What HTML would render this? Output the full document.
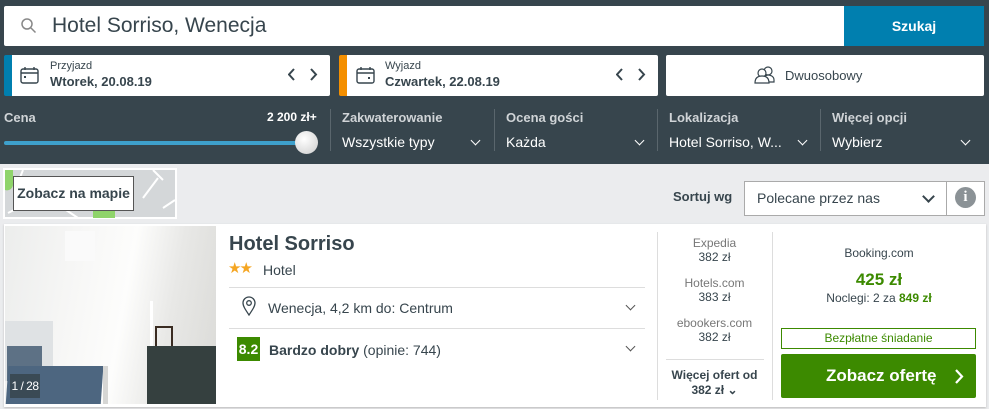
<!DOCTYPE html><html><head><meta charset="utf-8"><style>
*{box-sizing:border-box;margin:0;padding:0}
body{width:989px;height:409px;overflow:hidden;background:#ebecee;font-family:"Liberation Sans",sans-serif;position:relative;color:#37454d}
.a{position:absolute}
.top{left:0;top:0;width:989px;height:164px;background:#37454d}
.w{background:#fff;border-radius:2px}
.lbl{font-size:13px;color:#d0d4d7;font-weight:bold}
.val{font-size:14px;color:#fff}
.sep{width:1px;height:42px;background:#5a666d;top:109px}
.chev{width:7px;height:7px;border-right:1.6px solid #fff;border-bottom:1.6px solid #fff;transform:rotate(45deg)}
.chevd{width:7px;height:7px;border-right:1.6px solid #555;border-bottom:1.6px solid #555;transform:rotate(45deg)}
.g{color:#777;font-size:12px;text-align:center;width:115px}
.g b{display:block;color:#37454d;font-weight:normal}
</style></head><body>
<div class="a top"></div>
<div class="a w" style="left:4px;top:6px;width:842px;height:40px;border-radius:2px 0 0 2px"></div>
<svg class="a" style="left:20px;top:17px" width="17" height="17" viewBox="0 0 17 17"><circle cx="7" cy="7" r="5" fill="none" stroke="#888" stroke-width="1.5"/><path d="M11 11l4.5 4.5" stroke="#888" stroke-width="1.5"/></svg>
<div class="a" style="left:52px;top:14px;font-size:21px;color:#37454d">Hotel Sorriso, Wenecja</div>
<div class="a" style="left:844px;top:6px;width:140px;height:40px;background:#007faf;color:#fff;font-weight:bold;font-size:14px;text-align:center;line-height:40px">Szukaj</div>

<div class="a w" style="left:4px;top:55px;width:326px;height:41px;border-left:8px solid #007faf"></div>
<svg class="a" style="left:20px;top:67px" width="19" height="17"><rect x="1" y="2" width="17" height="14" rx="2" fill="none" stroke="#37454d" stroke-width="1.4"/><path d="M1 6h17M5 0v3M14 0v3" stroke="#37454d" stroke-width="1.4"/><rect x="4" y="9" width="2" height="2" fill="#37454d"/></svg>
<div class="a" style="left:50px;top:60px;font-size:11px">Przyjazd</div>
<div class="a" style="left:50px;top:74px;font-size:13px;font-weight:bold">Wtorek, 20.08.19</div>
<svg class="a" style="left:288px;top:68px" width="30" height="13"><path d="M6 1L1 6.5 6 12M23 1l5 5.5-5 5.5" fill="none" stroke="#37454d" stroke-width="2"/></svg>
<div class="a w" style="left:339px;top:55px;width:319px;height:41px;border-left:8px solid #f48f00"></div>
<svg class="a" style="left:356px;top:67px" width="19" height="17"><rect x="1" y="2" width="17" height="14" rx="2" fill="none" stroke="#37454d" stroke-width="1.4"/><path d="M1 6h17M5 0v3M14 0v3" stroke="#37454d" stroke-width="1.4"/><rect x="12" y="10" width="2" height="2" fill="#37454d"/></svg>
<div class="a" style="left:385px;top:60px;font-size:11px">Wyjazd</div>
<div class="a" style="left:385px;top:74px;font-size:13px;font-weight:bold">Czwartek, 22.08.19</div>
<svg class="a" style="left:616px;top:68px" width="30" height="13"><path d="M6 1L1 6.5 6 12M23 1l5 5.5-5 5.5" fill="none" stroke="#37454d" stroke-width="2"/></svg>
<div class="a w" style="left:666px;top:55px;width:318px;height:41px"></div>
<svg class="a" style="left:754px;top:65px" width="22" height="19"><circle cx="14" cy="6" r="4" fill="none" stroke="#37454d" stroke-width="1.2"/><path d="M9 17c0-5 3-7 5-7s6 1 6 5v2z" fill="#fff" stroke="#37454d" stroke-width="1.2"/><circle cx="8" cy="8" r="4" fill="#fff" stroke="#37454d" stroke-width="1.2"/><path d="M1 18c0-5 3-7 7-7s7 2 7 7z" fill="#fff" stroke="#37454d" stroke-width="1.2"/></svg>
<div class="a" style="left:785px;top:68px;font-size:13px">Dwuosobowy</div>

<div class="a lbl" style="left:4px;top:110px">Cena</div>
<div class="a" style="left:267px;top:110px;font-size:12px;color:#fff;font-weight:bold">2 200 zł+</div>
<div class="a" style="left:4px;top:141px;width:300px;height:4px;background:#3ea0cc;border-radius:2px"></div>
<div class="a" style="left:295px;top:131px;width:23px;height:23px;border-radius:50%;background:radial-gradient(circle at 40% 35%,#fff,#ccc)"></div>
<div class="a sep" style="left:330px"></div><div class="a sep" style="left:494px"></div><div class="a sep" style="left:657px"></div><div class="a sep" style="left:820px"></div>
<div class="a lbl" style="left:342px;top:110px">Zakwaterowanie</div><div class="a val" style="left:342px;top:134px">Wszystkie typy</div><div class="a chev" style="left:472px;top:137px"></div>
<div class="a lbl" style="left:506px;top:110px">Ocena gości</div><div class="a val" style="left:506px;top:134px">Każda</div><div class="a chev" style="left:636px;top:137px"></div>
<div class="a lbl" style="left:669px;top:110px">Lokalizacja</div><div class="a val" style="left:669px;top:134px">Hotel Sorriso, W...</div><div class="a chev" style="left:799px;top:137px"></div>
<div class="a lbl" style="left:832px;top:110px">Więcej opcji</div><div class="a val" style="left:832px;top:134px">Wybierz</div><div class="a chev" style="left:962px;top:137px"></div>

<svg class="a" style="left:3px;top:168px" width="174" height="51">
<rect x="1" y="1" width="172" height="49" fill="#d4d7d9" stroke="#fff" stroke-width="2"/>
<path d="M20 2l-8 20M60 40l15 10M140 30l15-20M5 45l20-10M150 2l10 10M160 40l12-8" stroke="#fff" stroke-width="2" fill="none"/>
<path d="M2 2h8v14a6 6 0 0 1-8 6z" fill="#8fd46a"/>
<path d="M90 50v-12a6 6 0 0 1 6-6h10a6 6 0 0 1 6 6v12z" fill="#8fd46a"/>
<rect x="10.5" y="8.5" width="120" height="34" fill="#fff" stroke="#555" stroke-width="1"/>
<text x="70.5" y="30" text-anchor="middle" font-family="Liberation Sans, sans-serif" font-size="14" font-weight="bold" fill="#37454d">Zobacz na mapie</text>
</svg>
<div class="a" style="left:673px;top:189px;font-size:13px;font-weight:bold">Sortuj wg</div>
<div class="a" style="left:744px;top:181px;width:241px;height:35px;background:#fff;border:1px solid #aaa"></div>
<div class="a" style="left:946px;top:181px;width:1px;height:35px;background:#aaa"></div>
<div class="a" style="left:757px;top:190px;font-size:14px">Polecane przez nas</div>
<div class="a" style="left:924px;top:192px;width:9px;height:9px;border-right:2px solid #37454d;border-bottom:2px solid #37454d;transform:rotate(45deg)"></div>
<div class="a" style="left:955px;top:187px;width:21px;height:21px;border-radius:50%;background:#8b9296;color:#fff;font-weight:bold;text-align:center;font-size:15px;line-height:21px;font-family:'Liberation Serif',serif">i</div>

<div class="a" style="left:4px;top:224px;width:982px;height:183px;background:#fff;box-shadow:0 1px 2px #bbb"></div>
<div class="a" style="left:5px;top:226px;width:211px;height:178px;background:linear-gradient(100deg,#ecedec 0%,#f6f6f5 30%,#fdfdfc 55%,#e8e8e6 75%,#dadad7 100%);overflow:hidden">
<div class="a" style="left:60px;top:5px;width:30px;height:30px;background:#fafafa"></div>
<div class="a" style="left:145px;top:75px;width:3px;height:55px;background:#fff"></div>
<div class="a" style="left:0;top:95px;width:48px;height:60px;background:#dfe2e4"></div>
<div class="a" style="left:2px;top:120px;width:35px;height:35px;background:#5d7185"></div>
<div class="a" style="left:2px;top:140px;width:95px;height:40px;background:#4d6680;transform:skewX(-4deg)"></div>
<div class="a" style="left:98px;top:140px;width:5px;height:40px;background:#d6d6d4"></div>
<div class="a" style="left:150px;top:100px;width:18px;height:30px;border:2px solid #3a2c22"></div>
<div class="a" style="left:142px;top:120px;width:69px;height:60px;background:#35403f"></div>
</div>
<div class="a" style="left:10px;top:374px;width:30px;height:24px;background:rgba(55,69,77,.85);color:#fff;font-size:12px;text-align:center;line-height:24px;white-space:nowrap;letter-spacing:-0.5px">1 / 28</div>
<div class="a" style="left:229px;top:233px;font-size:20px;font-weight:bold">Hotel Sorriso</div>
<div class="a" style="left:228px;top:259px;font-size:15px;color:#f5a623;letter-spacing:-2px">★★</div>
<div class="a" style="left:263px;top:262px;font-size:14px">Hotel</div>
<div class="a" style="left:229px;top:287px;width:416px;height:1px;background:#ddd"></div>
<svg class="a" style="left:242px;top:296px" width="14" height="20"><path d="M7 19C3 13 1 10 1 7a6 6 0 0 1 12 0c0 3-2 6-6 12z" fill="none" stroke="#37454d" stroke-width="1.3"/><circle cx="7" cy="7" r="2.3" fill="none" stroke="#37454d" stroke-width="1.3"/></svg>
<div class="a" style="left:268px;top:300px;font-size:14px">Wenecja, 4,2 km do: Centrum</div>
<div class="a chevd" style="left:627px;top:302px"></div>
<div class="a" style="left:229px;top:328px;width:416px;height:1px;background:#ddd"></div>
<div class="a" style="left:237px;top:337px;width:23px;height:24px;background:#3c8a00;color:#fff;font-weight:bold;font-size:14px;text-align:center;line-height:24px">8.2</div>
<div class="a" style="left:269px;top:342px;font-size:14px"><b>Bardzo dobry</b> (opinie: 744)</div>
<div class="a chevd" style="left:627px;top:343px"></div>
<div class="a" style="left:657px;top:232px;width:1px;height:168px;background:#ddd"></div>
<div class="a" style="left:772px;top:232px;width:1px;height:168px;background:#ddd"></div>
<div class="a g" style="left:657px;top:236px">Expedia<b>382 zł</b></div>
<div class="a g" style="left:657px;top:276px">Hotels.com<b>383 zł</b></div>
<div class="a g" style="left:657px;top:316px">ebookers.com<b>382 zł</b></div>
<div class="a" style="left:666px;top:359px;width:98px;height:1px;background:#ddd"></div>
<div class="a" style="left:657px;top:368px;width:115px;text-align:center;font-size:12px;font-weight:bold;line-height:15px">Więcej ofert od<br>382 zł ⌄</div>
<div class="a" style="left:773px;top:246px;width:212px;text-align:center;font-size:12px">Booking.com</div>
<div class="a" style="left:773px;top:270px;width:212px;text-align:center;font-size:17px;font-weight:bold;color:#3c8a00">425 zł</div>
<div class="a" style="left:773px;top:291px;width:212px;text-align:center;font-size:12px">Noclegi: 2 za <b style="color:#3c8a00">849 zł</b></div>
<div class="a" style="left:781px;top:328px;width:195px;height:21px;border:1px solid #3c8a00;color:#3c8a00;font-size:12px;text-align:center;line-height:19px">Bezpłatne śniadanie</div>
<div class="a" style="left:781px;top:354px;width:195px;height:44px;background:#3c8a00;border-radius:2px;color:#fff;font-size:17px;font-weight:bold;line-height:44px;padding-left:45px">Zobacz ofertę</div>
<svg class="a" style="left:954px;top:369px" width="10" height="15"><path d="M2 1l6 6.5L2 14" fill="none" stroke="#fff" stroke-width="2.2"/></svg>
</body></html>
